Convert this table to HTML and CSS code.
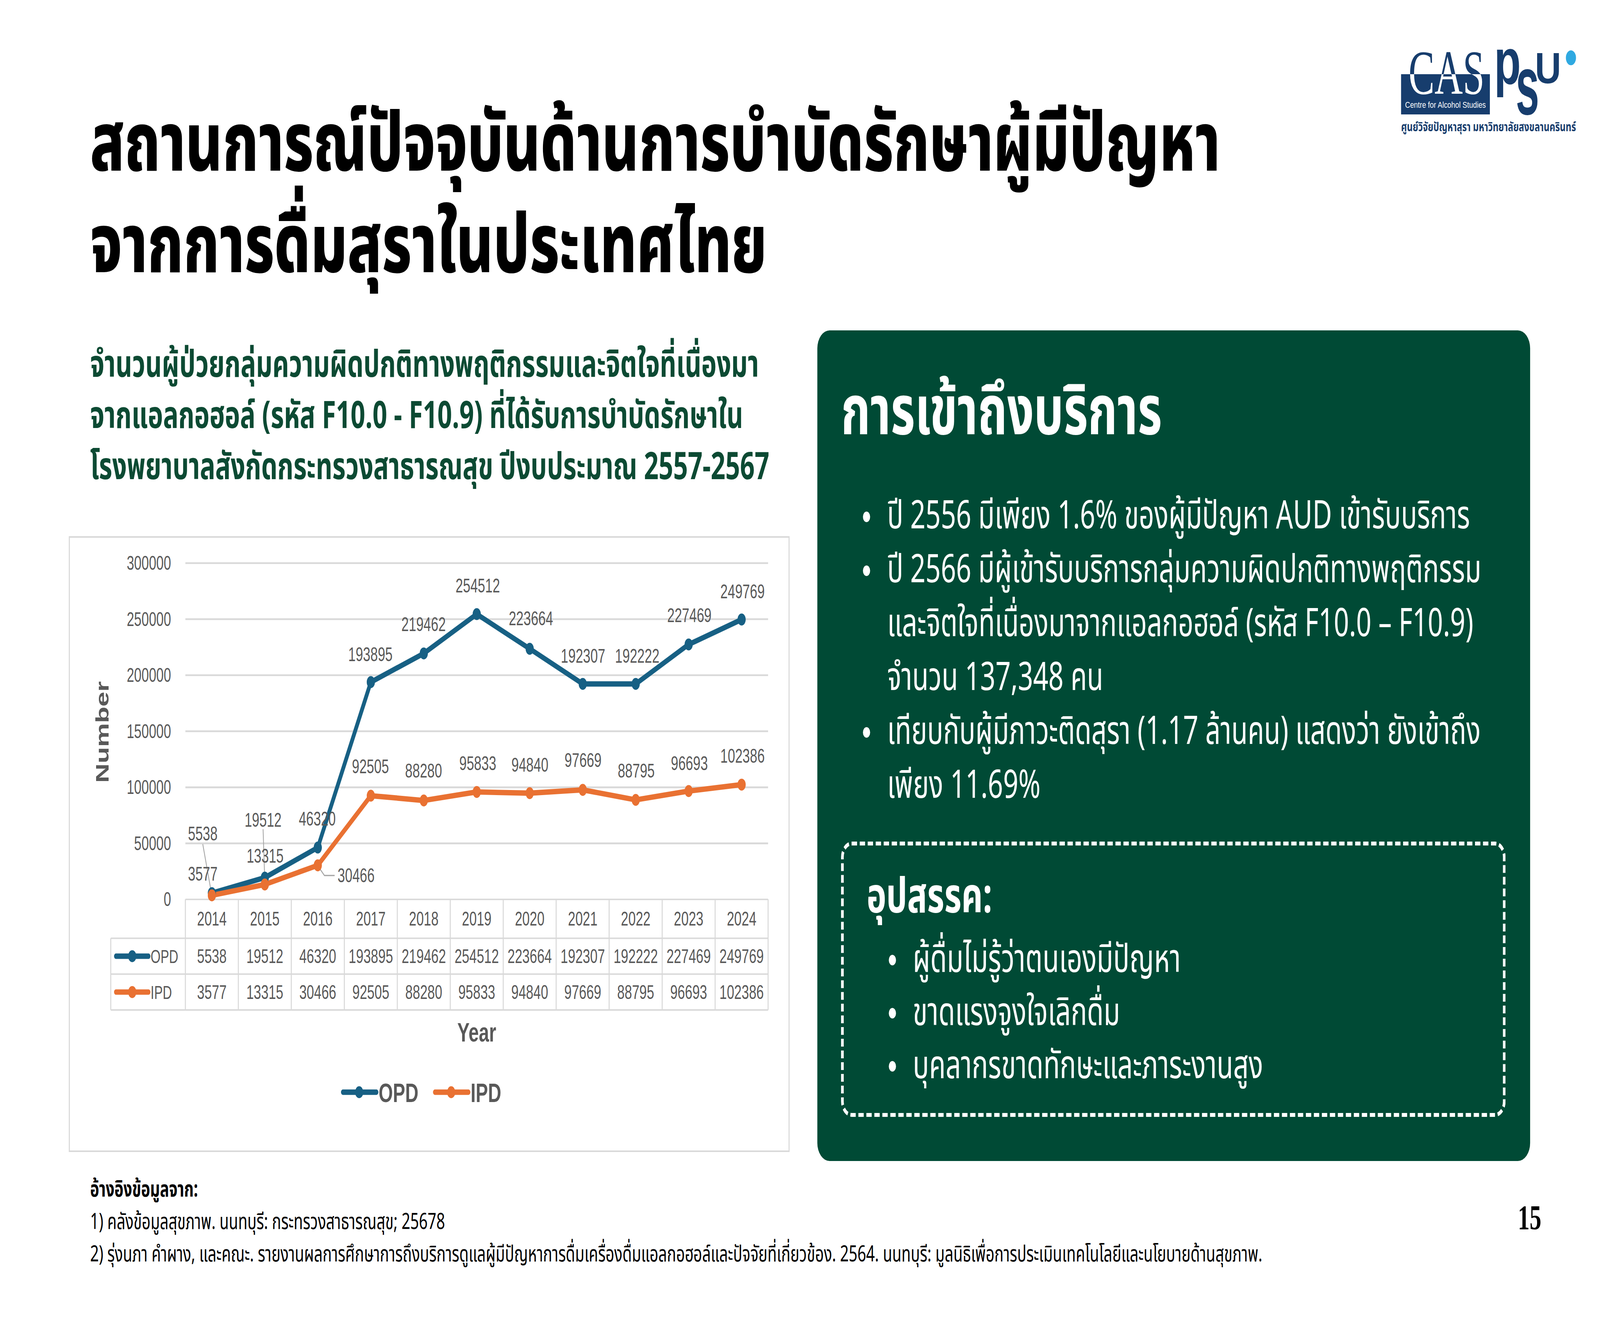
FILE: index.html
```html
<!DOCTYPE html>
<html lang="th">
<head>
<meta charset="utf-8">
<title>สถานการณ์ปัจจุบันด้านการบำบัดรักษา</title>
<link rel="stylesheet" href="styles.css">
</head>
<body>
<div class="stage">
<div class="slide">
  <header class="top">
    <h1 class="title">สถานการณ์ปัจจุบันด้านการบำบัดรักษาผู้มีปัญหา<br>จากการดื่มสุราในประเทศไทย</h1>
    <div class="logo">
      <svg class="logo-svg" viewBox="0 0 690 220" width="690" height="220">
        <defs>
          <linearGradient id="casfill" gradientUnits="userSpaceOnUse" x1="0" y1="0" x2="0" y2="220">
            <stop offset="0" stop-color="#173d6d"/>
            <stop offset="0.2864" stop-color="#173d6d"/>
            <stop offset="0.2864" stop-color="#ffffff"/>
            <stop offset="1" stop-color="#ffffff"/>
          </linearGradient>
        </defs>
        <rect x="0" y="63" width="333" height="103" fill="#173d6d"/>
        <text class="cas" x="28" y="113" textLength="285" lengthAdjust="spacingAndGlyphs" fill="url(#casfill)">CAS</text>
        <text class="cfas" x="15" y="149" textLength="303" lengthAdjust="spacingAndGlyphs">Centre for Alcohol Studies</text>
        <text class="psu psu-p" x="349" y="88" textLength="100" lengthAdjust="spacingAndGlyphs">p</text>
        <text class="psu psu-s" x="430" y="166" textLength="88" lengthAdjust="spacingAndGlyphs">s</text>
        <text class="psu psu-u" x="502" y="86" textLength="98" lengthAdjust="spacingAndGlyphs">U</text>
        <circle cx="637" cy="21" r="19" fill="#2fa9e1"/>
        <text class="logo-th" x="0" y="209" textLength="656" lengthAdjust="spacingAndGlyphs">ศูนย์วิจัยปัญหาสุรา มหาวิทยาลัยสงขลานครินทร์</text>
      </svg>
    </div>
  </header>

  <main class="content">
    <section class="left">
      <p class="subtitle">จำนวนผู้ป่วยกลุ่มความผิดปกติทางพฤติกรรมและจิตใจที่เนื่องมา<br>จากแอลกอฮอล์ (รหัส F10.0 - F10.9) ที่ได้รับการบำบัดรักษาใน<br>โรงพยาบาลสังกัดกระทรวงสาธารณสุข ปีงบประมาณ 2557-2567</p>
      <div class="chart">
        <svg class="chart-svg" viewBox="0 0 703 410" preserveAspectRatio="none">
          <g class="grid">
            <line x1="113" y1="17" x2="683" y2="17"/>
            <line x1="113" y1="54.5" x2="683" y2="54.5"/>
            <line x1="113" y1="92" x2="683" y2="92"/>
            <line x1="113" y1="129.5" x2="683" y2="129.5"/>
            <line x1="113" y1="167" x2="683" y2="167"/>
            <line x1="113" y1="204.5" x2="683" y2="204.5"/>
          </g>
          <g class="table-lines">
            <line x1="113" y1="242" x2="683" y2="242"/>
            <line x1="40" y1="268" x2="683" y2="268"/>
            <line x1="40" y1="292" x2="683" y2="292"/>
            <line x1="40" y1="316" x2="683" y2="316"/>
            <line x1="40" y1="268" x2="40" y2="316"/>
            <line x1="113" y1="242" x2="113" y2="316"/>
            <line x1="164.8" y1="242" x2="164.8" y2="316"/>
            <line x1="216.6" y1="242" x2="216.6" y2="316"/>
            <line x1="268.5" y1="242" x2="268.5" y2="316"/>
            <line x1="320.3" y1="242" x2="320.3" y2="316"/>
            <line x1="372.1" y1="242" x2="372.1" y2="316"/>
            <line x1="423.9" y1="242" x2="423.9" y2="316"/>
            <line x1="475.7" y1="242" x2="475.7" y2="316"/>
            <line x1="527.5" y1="242" x2="527.5" y2="316"/>
            <line x1="579.4" y1="242" x2="579.4" y2="316"/>
            <line x1="631.2" y1="242" x2="631.2" y2="316"/>
            <line x1="683" y1="242" x2="683" y2="316"/>
          </g>
          <g class="ylabels">
            <text x="99" y="21.5">300000</text>
            <text x="99" y="59">250000</text>
            <text x="99" y="96.5">200000</text>
            <text x="99" y="134">150000</text>
            <text x="99" y="171.5">100000</text>
            <text x="99" y="209">50000</text>
            <text x="99" y="246.5">0</text>
          </g>
          <text class="axis-title" transform="translate(38 130) rotate(-90)">Number</text>
          <text class="axis-title" x="398" y="337">Year</text>

          <g class="leaders">
            <line x1="130" y1="205" x2="138" y2="236"/>
            <line x1="189" y1="195" x2="190.5" y2="226"/>
            <polyline points="243,220 249,226 259,226"/>
          </g>

          <polyline class="line-opd" points="138.9,237.8 190.7,227.4 242.5,207.3 294.4,96.6 346.2,77.4 398,51.1 449.8,74.3 501.7,97.8 553.5,97.8 605.3,71.4 657.1,54.7"/>
          <polyline class="line-ipd" points="138.9,239.3 190.7,232 242.5,219.2 294.4,172.6 346.2,175.8 398,170.1 449.8,170.9 501.7,168.7 553.5,175.4 605.3,169.5 657.1,165.2"/>
          <g class="dots-opd">
            <circle cx="138.9" cy="237.8" r="4"/><circle cx="190.7" cy="227.4" r="4"/><circle cx="242.5" cy="207.3" r="4"/><circle cx="294.4" cy="96.6" r="4"/><circle cx="346.2" cy="77.4" r="4"/><circle cx="398" cy="51.1" r="4"/><circle cx="449.8" cy="74.3" r="4"/><circle cx="501.7" cy="97.8" r="4"/><circle cx="553.5" cy="97.8" r="4"/><circle cx="605.3" cy="71.4" r="4"/><circle cx="657.1" cy="54.7" r="4"/>
          </g>
          <g class="dots-ipd">
            <circle cx="138.9" cy="239.3" r="4"/><circle cx="190.7" cy="232" r="4"/><circle cx="242.5" cy="219.2" r="4"/><circle cx="294.4" cy="172.6" r="4"/><circle cx="346.2" cy="175.8" r="4"/><circle cx="398" cy="170.1" r="4"/><circle cx="449.8" cy="170.9" r="4"/><circle cx="501.7" cy="168.7" r="4"/><circle cx="553.5" cy="175.4" r="4"/><circle cx="605.3" cy="169.5" r="4"/><circle cx="657.1" cy="165.2" r="4"/>
          </g>

          <g class="dlabels">
            <text x="130" y="202.5">5538</text>
            <text x="189" y="193.5">19512</text>
            <text x="242" y="192.5">46320</text>
            <text x="294" y="82.5">193895</text>
            <text x="346" y="62.5">219462</text>
            <text x="399" y="36.5">254512</text>
            <text x="451" y="58.5">223664</text>
            <text x="502" y="83.5">192307</text>
            <text x="555" y="83.5">192222</text>
            <text x="606" y="56.5">227469</text>
            <text x="658" y="40.5">249769</text>
            <text x="130" y="229.5">3577</text>
            <text x="191" y="217.5">13315</text>
            <text x="280" y="230.5">30466</text>
            <text x="294" y="157.5">92505</text>
            <text x="346" y="160.5">88280</text>
            <text x="399" y="155.5">95833</text>
            <text x="450" y="156.5">94840</text>
            <text x="502" y="153.5">97669</text>
            <text x="554" y="160.5">88795</text>
            <text x="606" y="155.5">96693</text>
            <text x="658" y="150.5">102386</text>
          </g>

          <g class="tcells">
            <text x="138.9" y="259.5">2014</text><text x="190.7" y="259.5">2015</text><text x="242.5" y="259.5">2016</text><text x="294.4" y="259.5">2017</text><text x="346.2" y="259.5">2018</text><text x="398" y="259.5">2019</text><text x="449.8" y="259.5">2020</text><text x="501.7" y="259.5">2021</text><text x="553.5" y="259.5">2022</text><text x="605.3" y="259.5">2023</text><text x="657.1" y="259.5">2024</text>
            <text x="138.9" y="284.5">5538</text><text x="190.7" y="284.5">19512</text><text x="242.5" y="284.5">46320</text><text x="294.4" y="284.5">193895</text><text x="346.2" y="284.5">219462</text><text x="398" y="284.5">254512</text><text x="449.8" y="284.5">223664</text><text x="501.7" y="284.5">192307</text><text x="553.5" y="284.5">192222</text><text x="605.3" y="284.5">227469</text><text x="657.1" y="284.5">249769</text>
            <text x="138.9" y="308.5">3577</text><text x="190.7" y="308.5">13315</text><text x="242.5" y="308.5">30466</text><text x="294.4" y="308.5">92505</text><text x="346.2" y="308.5">88280</text><text x="398" y="308.5">95833</text><text x="449.8" y="308.5">94840</text><text x="501.7" y="308.5">97669</text><text x="553.5" y="308.5">88795</text><text x="605.3" y="308.5">96693</text><text x="657.1" y="308.5">102386</text>
          </g>
          <g class="tkeys">
            <line class="key-opd" x1="45" y1="280" x2="77" y2="280"/><circle class="kdot-opd" cx="61" cy="280" r="4"/>
            <text x="79" y="284.5">OPD</text>
            <line class="key-ipd" x1="45" y1="304" x2="77" y2="304"/><circle class="kdot-ipd" cx="61" cy="304" r="4"/>
            <text x="79" y="308.5">IPD</text>
          </g>

          <g class="legend">
            <line class="key-opd" x1="267" y1="371" x2="300" y2="371"/><circle class="kdot-opd" cx="283" cy="371" r="4"/>
            <text x="302" y="377.5">OPD</text>
            <line class="key-ipd" x1="357" y1="371" x2="390" y2="371"/><circle class="kdot-ipd" cx="373" cy="371" r="4"/>
            <text x="392" y="377.5">IPD</text>
          </g>
        </svg>
      </div>
    </section>

    <section class="panel">
      <h2 class="panel-title">การเข้าถึงบริการ</h2>
      <ul class="facts">
        <li><span>ปี 2556 มีเพียง 1.6% ของผู้มีปัญหา AUD เข้ารับบริการ</span></li>
        <li><span>ปี 2566 มีผู้เข้ารับบริการกลุ่มความผิดปกติทางพฤติกรรม<br>และจิตใจที่เนื่องมาจากแอลกอฮอล์ (รหัส F10.0 – F10.9)<br>จำนวน 137,348 คน</span></li>
        <li><span>เทียบกับผู้มีภาวะติดสุรา (1.17 ล้านคน) แสดงว่า ยังเข้าถึง<br>เพียง 11.69%</span></li>
      </ul>
      <div class="obstacles">
        <h3 class="obs-title">อุปสรรค:</h3>
        <ul class="obs-list">
          <li><span>ผู้ดื่มไม่รู้ว่าตนเองมีปัญหา</span></li>
          <li><span>ขาดแรงจูงใจเลิกดื่ม</span></li>
          <li><span>บุคลากรขาดทักษะและภาระงานสูง</span></li>
        </ul>
      </div>
    </section>
  </main>

  <footer class="foot">
    <div class="refs">
      <p class="refs-title">อ้างอิงข้อมูลจาก:</p>
      <p>1) คลังข้อมูลสุขภาพ. นนทบุรี: กระทรวงสาธารณสุข; 25678</p>
      <p>2) รุ่งนภา คำผาง, และคณะ. รายงานผลการศึกษาการถึงบริการดูแลผู้มีปัญหาการดื่มเครื่องดื่มแอลกอฮอล์และปัจจัยที่เกี่ยวข้อง. 2564. นนทบุรี: มูลนิธิเพื่อการประเมินเทคโนโลยีและนโยบายด้านสุขภาพ.</p>
    </div>
    <div class="pagenum">15</div>
  </footer>
</div>
</div>
<script src="script.js"></script>
</body>
</html>
```

FILE: styles.css
```css
* { box-sizing: border-box; }
html, body { margin: 0; padding: 0; background: #ffffff; overflow: hidden; }
body {
  font-family: "Noto Sans Thai", "Noto Sans Thai UI", "Noto Sans", "Noto Sans CJK SC", sans-serif;
  color: #000;
}
.stage {
  width: 100vw;
  height: 100vh;
  overflow: hidden;
}
.slide {
  width: 6000px;
  height: 3375px;
  overflow: hidden;
  background: #ffffff;
  transform-origin: 0 0;
}

/* header */
.top {
  display: flex;
  justify-content: space-between;
  align-items: flex-start;
  height: 846px;
  padding-left: 338px;
  padding-right: 56px;
}
.title {
  margin: 242px 0 0 0;
  font-size: 212px;
  line-height: 260px;
  font-weight: 800;
  color: #000;
  white-space: nowrap;
}
.logo { margin-top: 127px; width: 690px; height: 220px; flex: none; }
.logo-svg { display: block; overflow: visible; }
.cas { font-family: "Liberation Serif", serif; font-size: 160px; }
.cfas { font-family: "Liberation Sans", sans-serif; font-size: 22px; fill: #ffffff; }
.psu { font-family: "Liberation Sans", sans-serif; font-weight: 700; fill: #173d6d; }
.psu-p { font-size: 165px; }
.psu-s { font-size: 215px; }
.psu-u { font-size: 112px; }
.logo-th { font-size: 32px; font-weight: 700; fill: #173d6d; }

/* content */
.content {
  display: flex;
  gap: 104px;
  padding-left: 258px;
  height: 2127px;
}
.left { width: 2703px; flex: none; }
.subtitle {
  margin: 24px 0 0 80px;
  font-size: 96px;
  line-height: 131px;
  font-weight: 700;
  color: #0c4a33;
  white-space: nowrap;
}
.chart {
  margin-top: 110px;
  width: 2703px;
  height: 1577px;
  border: 4px solid #d9d9d9;
}
.chart-svg { display: block; width: 100%; height: 100%; }
.chart-svg text { font-family: "Liberation Sans", Arial, sans-serif; font-size: 13px; fill: #595959; }
.grid line { stroke: #d9d9d9; stroke-width: 1.2; }
.table-lines line { stroke: #d9d9d9; stroke-width: 1; }
.ylabels text { text-anchor: end; }
.dlabels text, .tcells text { text-anchor: middle; }
.chart-svg .axis-title { font-weight: 700; font-size: 18px; text-anchor: middle; }
.leaders line, .leaders polyline { stroke: #a6a6a6; stroke-width: 0.8; fill: none; }
.line-opd { fill: none; stroke: #176084; stroke-width: 3.6; stroke-linejoin: round; }
.line-ipd { fill: none; stroke: #e97132; stroke-width: 3.6; stroke-linejoin: round; }
.dots-opd circle, .kdot-opd { fill: #176084; }
.dots-ipd circle, .kdot-ipd { fill: #e97132; }
.key-opd { stroke: #176084; stroke-width: 3.6; stroke-linecap: round; }
.key-ipd { stroke: #e97132; stroke-width: 3.6; stroke-linecap: round; }
.chart-svg .tkeys text { font-size: 12.5px; }
.chart-svg .legend text { font-weight: 700; font-size: 18px; }

/* panel */
.panel {
  width: 2673px;
  flex: none;
  height: 2127px;
  background: #004a35;
  border-radius: 46px;
  padding: 112px 92px 0 89px;
  color: #ffffff;
}
.panel-title {
  margin: 0;
  font-size: 176px;
  line-height: 200px;
  font-weight: 700;
}
.facts, .obs-list { list-style: none; margin: 0; padding: 0; }
.facts { margin-top: 96px; padding-left: 82px; }
.facts li, .obs-list li {
  display: flex;
  align-items: flex-start;
  font-size: 100px;
  line-height: 138px;
  white-space: nowrap;
}
.facts li::before, .obs-list li::before {
  content: "";
  flex: none;
  width: 27px;
  height: 27px;
  border-radius: 50%;
  background: #ffffff;
  margin-top: 56px;
  margin-right: 64px;
}
.obstacles {
  margin-top: 73px;
  border: 10px dashed #ffffff;
  border-radius: 40px;
  padding: 58px 40px 52px 86px;
}
.obs-title {
  margin: 0;
  font-size: 124px;
  line-height: 150px;
  font-weight: 700;
}
.obs-list { padding-left: 83px; margin-top: 17px; }
.obs-list li { font-size: 101px; line-height: 136px; }
.obs-list li::before { margin-top: 55px; margin-right: 63px; }

/* footer */
.foot {
  display: flex;
  justify-content: space-between;
  align-items: flex-start;
  padding-left: 338px;
  padding-right: 220px;
}
.refs { margin-top: 33px; }
.refs p {
  margin: 0;
  font-size: 57px;
  line-height: 83px;
  white-space: nowrap;
}
.refs .refs-title { font-weight: 700; }
.pagenum {
  margin-top: 95px;
  font-family: "Liberation Serif", serif;
  font-weight: 700;
  font-size: 88px;
  line-height: 100px;
}
```

FILE: script.js
```js
(function () {
  function fit() {
    var slide = document.querySelector('.slide');
    if (!slide) return;
    var sx = window.innerWidth / 6000;
    var sy = window.innerHeight / 3375;
    slide.style.transform = 'scale(' + sx + ',' + sy + ')';
  }
  fit();
  window.addEventListener('resize', fit);
})();
```
